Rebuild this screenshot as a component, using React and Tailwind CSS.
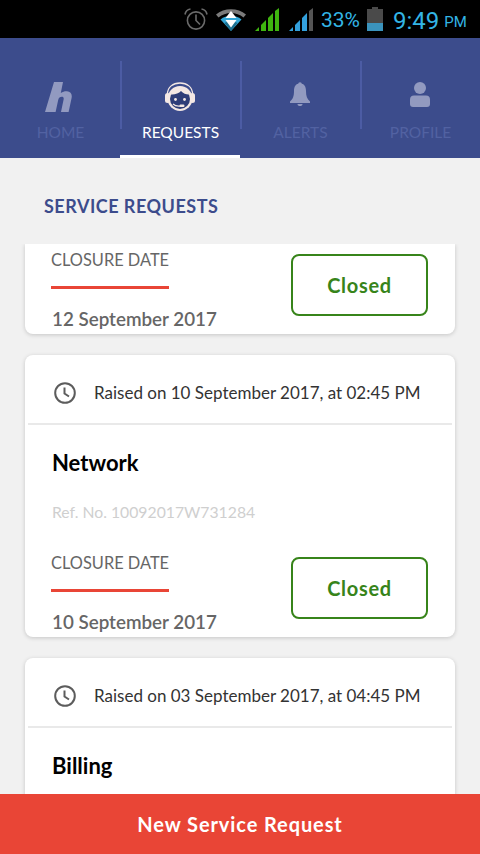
import React from "react";

function AlarmIcon() {
    return (
        <svg width="24" height="22" viewBox="0 0 24 22" fill="none" stroke="#6a6a6a" strokeWidth="1.6">
            <circle cx="12" cy="12.5" r="8.6" />
            <path d="M12 6.5V12.5L16 16.5" />
            <path d="M1 6.5C1.5 3.5 3.5 1.5 6.5 1M23 6.5C22.5 3.5 20.5 1.5 17.5 1" />
        </svg>
    );
}

function WifiIcon() {
    return (
        <svg width="30" height="24" viewBox="0 0 30 24">
            <path d="M0 7.5C8 0.5 22 0.5 30 7.5L27.5 10.5C20.5 4.5 9.5 4.5 2.5 10.5Z" fill="#7b7b7b" />
            <path d="M4.5 12.5C10.5 7.5 19.5 7.5 25.5 12.5L15 24Z" fill="#33a6d6" />
            <path d="M8.5 16C12 13.8 18 13.8 21.5 16L15 24Z" fill="#1b6f90" />
            <path d="M15 4L20.5 11H9.5Z" fill="#fff" />
            <path d="M15 20.5L20.5 13H9.5Z" fill="#fff" />
        </svg>
    );
}

function SignalIcon({ color }) {
    return (
        <svg width="25" height="23" viewBox="0 0 25 23">
            <path d="M0 23L4 19V23Z" fill={color} />
            <path d="M6 23V17L11 12V23Z" fill={color} />
            <path d="M13 23V10L18 5V23Z" fill={color} />
            <path d="M20 23V3L24 0V23Z" fill={color === "#33a0dc" ? "#555" : color} />
        </svg>
    );
}

function BatteryIcon() {
    return (
        <svg width="16" height="24" viewBox="0 0 16 24">
            <path d="M5 0H11V2H16V24H0V2H5Z" fill="#4a4a4a" />
            <rect x="0" y="16" width="16" height="8" fill="#3b93bd" />
        </svg>
    );
}

function HomeLogo() {
    return (
        <svg width="27" height="30" viewBox="0 0 27 30" fill="#929ac0">
            <path d="M9 0H18L15.8 11C18 9.6 20 9 22 9.2C25.6 9.6 27.4 12 26.6 16L23.6 30H16L18.6 17.4C19 15.6 18.2 14.8 16.8 14.8C15 14.8 13.6 16 13.2 18L10.6 30H0Z" />
        </svg>
    );
}

function AgentIcon() {
    return (
        <svg width="30" height="30" viewBox="0 0 30 30">
            <path d="M2.5 14V12C2.5 5 8 1 15 1C22 1 27.5 5 27.5 12V14" fill="none" stroke="#f4e8e4" strokeWidth="1.3" />
            <rect x="0" y="11" width="5" height="10" rx="2.5" fill="#f4e8e4" />
            <rect x="25" y="11" width="5" height="10" rx="2.5" fill="#f4e8e4" />
            <circle cx="15" cy="16.5" r="12.5" fill="#f4e8e4" />
            <circle cx="15" cy="17" r="10" fill="#2f3d78" />
            <path d="M6 12.5C7 8 10.5 5.5 15 5.5C19.5 5.5 23 8 24 12.5C21 12.5 18 11.5 16 9C14 11.5 9.5 12.8 6 12.5Z" fill="#f4e8e4" />
            <circle cx="10.5" cy="17.5" r="1.4" fill="#f4e8e4" />
            <circle cx="19.5" cy="17.5" r="1.4" fill="#f4e8e4" />
            <path d="M8 22C10.5 24.5 13 24.5 16 24" fill="none" stroke="#f4e8e4" strokeWidth="1.2" />
            <rect x="14.5" y="22.5" width="5" height="2.4" rx="1.2" fill="#f4e8e4" />
        </svg>
    );
}

function BellIcon() {
    return (
        <svg width="20" height="24" viewBox="0 0 20 24" fill="#929ac0">
            <circle cx="10" cy="2" r="1.8" />
            <path d="M10 1.5C14.5 1.5 16 5 16 9C16 14 17 17 20 19.5V21H0V19.5C3 17 4 14 4 9C4 5 5.5 1.5 10 1.5Z" />
            <path d="M7.5 22H12.5C12.5 23.4 11.4 24 10 24C8.6 24 7.5 23.4 7.5 22Z" />
        </svg>
    );
}

function UserIcon() {
    return (
        <svg width="20" height="25" viewBox="0 0 20 25" fill="#929ac0">
            <circle cx="10" cy="6" r="6" />
            <path d="M4 13.5H16C18.5 13.5 20 15 20 17.5V22C20 24 19 25 17 25H3C1 25 0 24 0 22V17.5C0 15 1.5 13.5 4 13.5Z" />
        </svg>
    );
}

function ClockIcon() {
    return (
        <svg width="22" height="22" viewBox="0 0 22 22" fill="none" stroke="#5c5c5c" strokeWidth="2">
            <circle cx="11" cy="11" r="9.8" />
            <path d="M10.5 5.5V11.5L15 14.5" />
        </svg>
    );
}

function NavTab({ icon, label, active, first }) {
    return (
        <div className={`w-[120px] pt-[23px] ${active ? "border-b-[3px] border-white" : ""}`}>
            <div className={`h-[68px] flex justify-center pt-[21px] pr-[3px] ${first ? "" : "border-l-2 border-[#4c5ca4]"}`}>
                {icon}
            </div>
            <div className={`-mt-[7px] pl-[1px] text-center text-[15.5px] leading-5 ${active ? "text-white" : "text-[#5262a2]"}`}>
                {label}
            </div>
        </div>
    );
}

function ClosureRow({ date }) {
    return (
        <div className="flex justify-between pl-[26px] pr-[27px]">
            <div className="w-[118px]">
                <div className="text-[16.4px] leading-5 text-[#666] whitespace-nowrap">CLOSURE DATE</div>
                <div className="h-[3px] bg-[#e94536] mt-[16px]" />
                <div className="text-[18.8px] leading-6 font-semibold text-[#666] whitespace-nowrap mt-[18px] ml-[1px]">{date}</div>
            </div>
            <div className="w-[137px] h-[62px] mt-[4px] rounded-lg border-2 border-[#37841a] flex items-center justify-center text-[20px] font-bold tracking-[0.7px] text-[#37841a]">
                Closed
            </div>
        </div>
    );
}

function RequestCard({ raised, title, refNo, date }) {
    return (
        <div className="mx-[25px] mt-[21px] min-h-[282px] bg-white rounded-lg shadow-[0_1px_4px_rgba(0,0,0,0.18)] shrink-0">
            <div className="h-[68px] flex items-center pt-[7px] pl-[28px] gap-[18px]">
                <div className="ml-[1px]"><ClockIcon /></div>
                <span className="text-[17px] text-[#333] whitespace-nowrap">{raised}</span>
            </div>
            <div className="h-[2px] mx-[3px] bg-[#e9e9e9]" />
            <div className="pt-[24px] pl-[27px] text-[22px] leading-7 font-bold text-black">{title}</div>
            {refNo && (
                <>
                    <div className="pt-[25px] pl-[27px] text-[15.75px] leading-5 text-[#cfcfcf]">{refNo}</div>
                    <div className="pt-[31px] pb-[3px]">
                        <ClosureRow date={date} />
                    </div>
                </>
            )}
        </div>
    );
}

export default function App() {
    return (
        <div className="w-[480px] h-[854px] overflow-hidden flex flex-col bg-[#f1f1f1]" style={{ fontFamily: '"Lato", "Liberation Sans", sans-serif' }}>
            {/* Status bar */}
            <div className="h-[38px] bg-black flex items-center shrink-0 pl-[184px] text-[#33b5e5]" style={{ fontFamily: 'Roboto, sans-serif' }}>
                <AlarmIcon />
                <div className="ml-[8px]"><WifiIcon /></div>
                <div className="ml-[9px]"><SignalIcon color="#3fb50f" /></div>
                <div className="ml-[9px]"><SignalIcon color="#33a0dc" /></div>
                <span className="ml-[7px] mt-[3px] text-[21px]">33%</span>
                <div className="ml-[7px]"><BatteryIcon /></div>
                <span className="ml-[10px] mt-[3px] text-[24px]">9:49</span>
                <span className="ml-[5px] mt-[7px] text-[15px]">PM</span>
            </div>

            {/* Nav */}
            <div className="h-[120px] bg-[#3c4c8c] flex shrink-0">
                <NavTab first icon={<HomeLogo />} label="HOME" />
                <NavTab active icon={<AgentIcon />} label="REQUESTS" />
                <NavTab icon={<BellIcon />} label="ALERTS" />
                <NavTab icon={<UserIcon />} label="PROFILE" />
            </div>

            <div className="h-[86px] pl-[44px] pt-[36px] text-[18px] leading-6 font-bold tracking-[0.5px] text-[#3c4c8c] shrink-0">
                SERVICE REQUESTS
            </div>

            {/* List */}
            <div className="flex-1 min-h-0 overflow-hidden flex flex-col">
                <div className="mx-[25px] h-[90px] pt-[6px] bg-white rounded-b-lg shadow-[0_1px_4px_rgba(0,0,0,0.18)] shrink-0">
                    <ClosureRow date="12 September 2017" />
                </div>
                <RequestCard raised="Raised on 10 September 2017, at 02:45 PM" title="Network" refNo="Ref. No. 10092017W731284" date="10 September 2017" />
                <RequestCard raised="Raised on 03 September 2017, at 04:45 PM" title="Billing" />
            </div>

            <div className="h-[60px] bg-[#e94536] flex items-center justify-center text-[20px] font-bold tracking-[0.9px] text-white shrink-0">
                New Service Request
            </div>
        </div>
    );
}
